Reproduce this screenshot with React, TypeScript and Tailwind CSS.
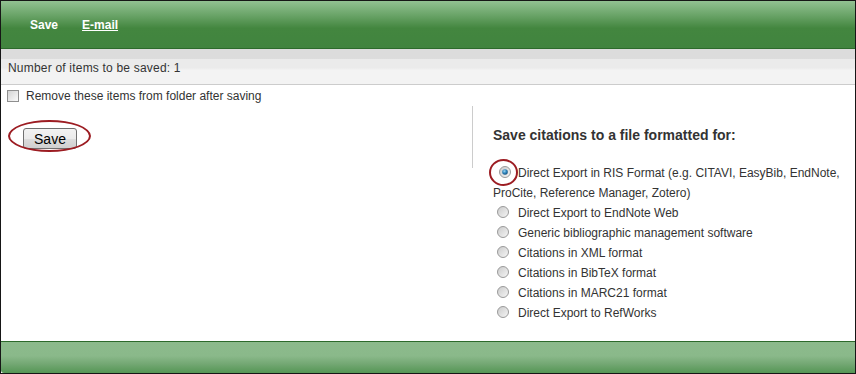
import React, { useState } from "react";

const formats = [
  "Direct Export to EndNote Web",
  "Generic bibliographic management software",
  "Citations in XML format",
  "Citations in BibTeX format",
  "Citations in MARC21 format",
  "Direct Export to RefWorks",
];

const Radio: React.FC<{ checked?: boolean }> = ({ checked }) => (
  <svg width="12" height="12" viewBox="0 0 12 12" className="inline-block align-[-1px]">
    <defs>
      <linearGradient id={checked ? "rg-on" : "rg-off"} x1="0" y1="0" x2="1" y2="1">
        <stop offset="0" stopColor="#c9c9c9" />
        <stop offset="1" stopColor="#f7f7f7" />
      </linearGradient>
      <radialGradient id="dot" cx="0.4" cy="0.35" r="0.7">
        <stop offset="0" stopColor="#9fd6f2" />
        <stop offset="0.5" stopColor="#2f86be" />
        <stop offset="1" stopColor="#134b78" />
      </radialGradient>
    </defs>
    <circle cx="6" cy="6" r="5.5" fill={`url(#${checked ? "rg-on" : "rg-off"})`} stroke="#9a9a9a" strokeWidth="1" />
    {checked && <circle cx="6" cy="6" r="2.8" fill="url(#dot)" />}
  </svg>
);

const App: React.FC = () => {
  const [selected, setSelected] = useState(0);

  return (
    <div
      className="relative w-[856px] h-[374px] flex flex-col border border-[#161616] bg-white text-[12px] text-[#333]"
      style={{ fontFamily: '"Liberation Sans", Arial, sans-serif' }}
    >
      <div className="h-[48px] shrink-0 border-b border-[#2d6a2c] bg-[linear-gradient(to_bottom,#92c192_0%,#6aa468_30%,#43863f_58%,#41843f_100%)] flex items-center pl-[29px] gap-[24px] font-bold text-white">
        <span>Save</span>
        <span className="underline">E-mail</span>
      </div>

      <div className="h-[36px] shrink-0 border-b border-[#cccccc] bg-[linear-gradient(to_bottom,#dcdcdc_0%,#dcdcdc_27%,#ebebeb_30%,#ebebeb_54%,#f3f3f3_60%,#f3f3f3_100%)] flex items-center pl-[7px] pt-[2px] tracking-[0.2px]">
        Number of items to be saved: 1
      </div>

      <div className="flex-1 flex flex-col">
        <label className="flex items-center h-[16px] mt-[3px] pl-[6px]">
          <span className="w-[12px] h-[12px] border border-[#8f8f8f] bg-[linear-gradient(135deg,#d4d4d4,#fafafa)] mr-[7px]" />
          Remove these items from folder after saving
        </label>

        <div className="flex mt-[2px]">
          <div className="w-[471px] shrink-0 pl-[22px] pt-[22px]">
            <button className="w-[54px] h-[21px] rounded-[3px] border border-[#707070] bg-[linear-gradient(to_bottom,#f2f2f2_0%,#ebebeb_50%,#dddddd_51%,#cfcfcf_100%)] text-[14px] text-black leading-none">
              Save
            </button>
          </div>
          <div className="flex-1">
            <div className="h-[62px] border-l border-[#cccccc] pl-[20px] pt-[20px]">
              <h3 className="font-bold text-[14px] leading-[18px]">Save citations to a file formatted for:</h3>
            </div>
            <div className="-mt-[5px] pl-[21px] pr-[6px] leading-[20px]">
              <div onClick={() => setSelected(0)}>
                <span className="ml-[6px] mr-[7px]">
                  <Radio checked={selected === 0} />
                </span>
                Direct Export in RIS Format (e.g. CITAVI, EasyBib, EndNote, ProCite, Reference Manager, Zotero)
              </div>
              {formats.map((f, i) => (
                <div key={f} onClick={() => setSelected(i + 1)}>
                  <span className="ml-[4px] mr-[9px]">
                    <Radio checked={selected === i + 1} />
                  </span>
                  {f}
                </div>
              ))}
            </div>
          </div>
        </div>
      </div>

      <div className="h-[32px] shrink-0 border-t border-[#2d6a2c] rounded-bl-[3px] bg-[linear-gradient(to_bottom,#8cba8c_0%,#8ab98a_45%,#74a874_70%,#559655_100%)]" />

      {/* red highlight rings */}
      <div className="absolute left-[7px] top-[119px] w-[83px] h-[32px] rounded-[50%] border-2 border-[#9c1c22]" />
      <div className="absolute left-[488px] top-[158px] w-[29px] h-[27px] rounded-[50%] border-2 border-[#9c1c22]" />
    </div>
  );
};

export default App;
